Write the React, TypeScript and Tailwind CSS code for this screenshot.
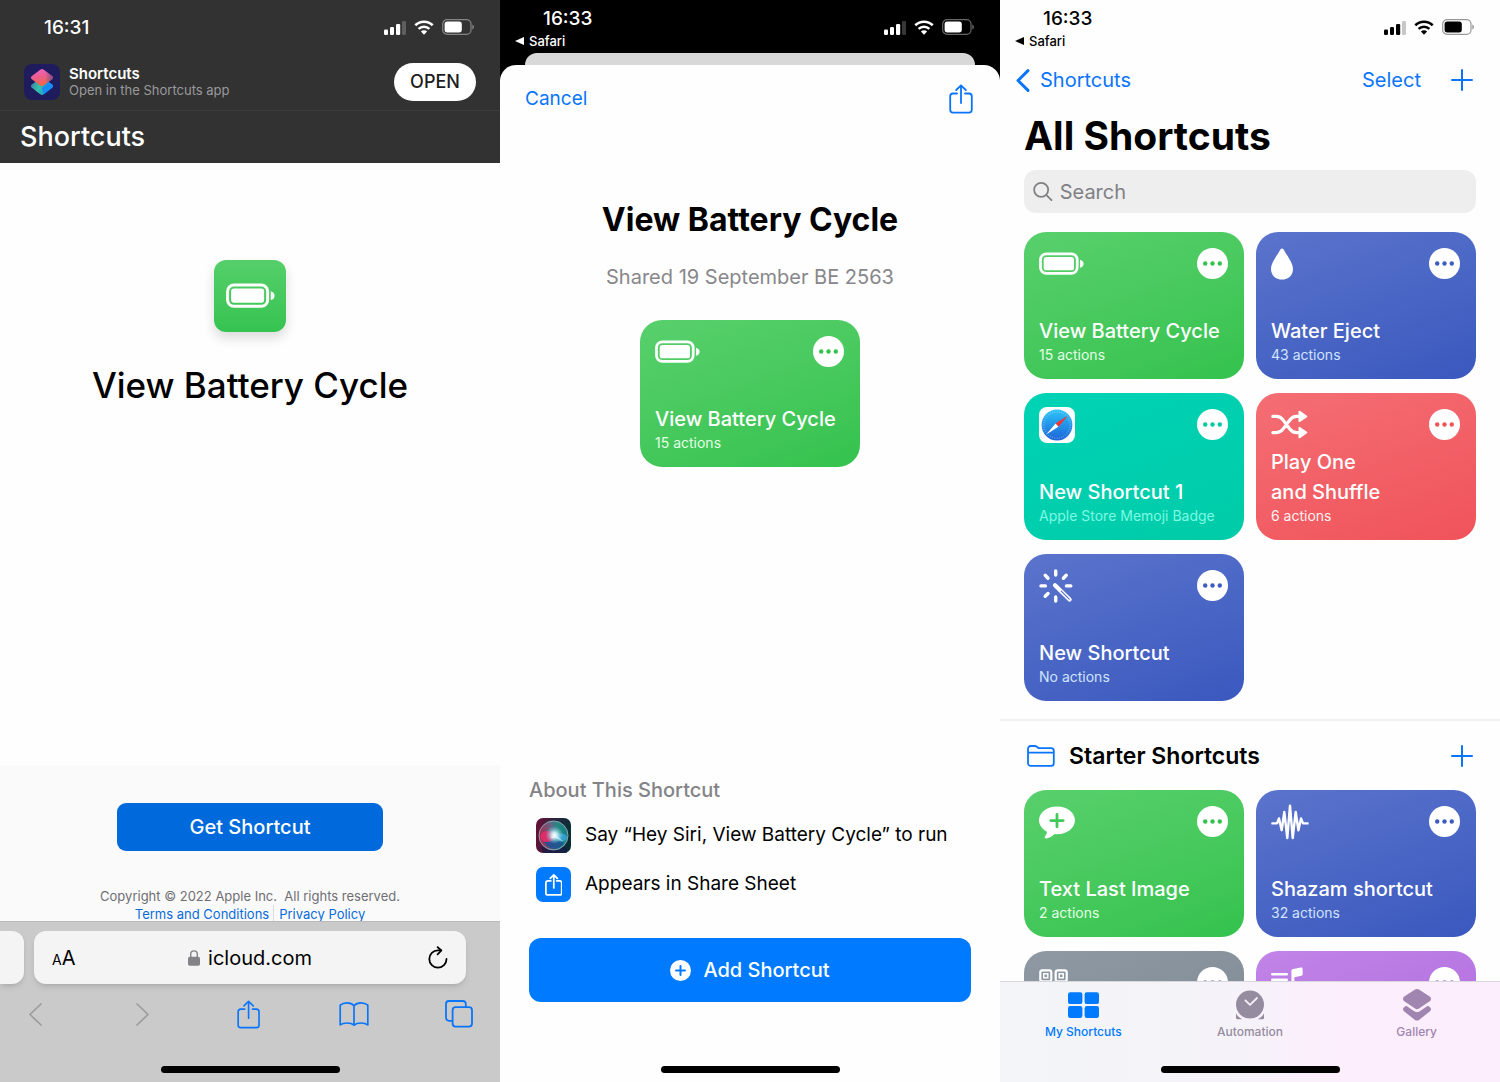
import type { ReactNode } from "react";
import clsx from "clsx";

type CardColor = "green" | "blue" | "teal" | "red" | "gray" | "purple";

interface Shortcut {
  id: string;
  title: string;
  subtitle: string;
  color: CardColor;
  icon: ReactNode;
}

const cardColors: Record<CardColor, string> = {
  green: "from-[#58d06c] to-[#34c24e]",
  blue: "from-[#5b74cc] to-[#3a58be]",
  teal: "from-[#00d3b5] to-[#00cba8]",
  red: "from-[#f46e74] to-[#f0525a]",
  gray: "from-[#8f99a3] to-[#7b8690]",
  purple: "from-[#c184e7] to-[#ac66dc]",
};

const subtitleColors: Record<CardColor, string> = {
  green: "text-[#e2ffe6]",
  blue: "text-[#d0e4ff]",
  teal: "text-[#7dfae4]",
  red: "text-[#fff0f0]",
  gray: "text-white",
  purple: "text-white",
};

const dotColors: Record<CardColor, string> = {
  green: "text-[#34c24e]",
  blue: "text-[#3d5bc0]",
  teal: "text-[#00c9a6]",
  red: "text-[#f0525a]",
  gray: "text-[#7b8690]",
  purple: "text-[#ac66dc]",
};

/* ---------- Icons ---------- */

function SignalIcon() {
  return (
    <svg width="22" height="15" viewBox="0 0 22 15" fill="currentColor">
      <rect x="0" y="9.5" width="4" height="5.5" rx="1.2" />
      <rect x="6" y="7" width="4" height="8" rx="1.2" />
      <rect x="12" y="4" width="4.2" height="11" rx="1.2" />
      <rect x="18" y="1" width="4" height="14" rx="1.2" opacity="0.22" />
    </svg>
  );
}

function WifiIcon() {
  return (
    <svg width="20" height="15" viewBox="0 0 20 15" fill="none">
      <path d="M1.3 5.3a12.6 12.6 0 0 1 17.4 0" stroke="currentColor" strokeWidth="2.6" />
      <path d="M4.6 8.8a7.8 7.8 0 0 1 10.8 0" stroke="currentColor" strokeWidth="2.5" />
      <path d="M10 14.8 6.9 11.6a4.4 4.4 0 0 1 6.2 0Z" fill="currentColor" />
    </svg>
  );
}

function StatusBatteryIcon() {
  return (
    <svg width="32" height="16" viewBox="0 0 32 16" fill="currentColor">
      <rect x="0.7" y="0.7" width="28.3" height="14.6" rx="4.4" fill="none" stroke="currentColor" strokeWidth="1.2" opacity="0.4" />
      <rect x="2.6" y="2.6" width="17.2" height="10.8" rx="2.6" />
      <path d="M30.4 5.6c1 .4 1.4 1.3 1.4 2.4s-.4 2-1.4 2.4Z" opacity="0.45" />
    </svg>
  );
}

function BatteryIcon({ className }: { className?: string }) {
  return (
    <svg viewBox="0 0 46 24" fill="white" className={className}>
      <rect x="1.5" y="1.9" width="37.6" height="20" rx="6" fill="none" stroke="white" strokeWidth="2.8" />
      <rect x="4.800" y="5.200" width="31" height="13.400" rx="2.600" />
      <path d="M42 7.800c2.400.6 3.600 2.300 3.600 4.100s-1.200 3.500-3.600 4.100Z" />
    </svg>
  );
}

function DropIcon() {
  return (
    <svg width="22" height="32" viewBox="0 0 22 32" fill="white">
      <path d="M11 .4c.7 0 1.200.4 1.600 1.100C16 7.800 22 14.600 22 21c0 6.400-4.800 10.600-11 10.600S0 27.400 0 21C0 14.600 6 7.800 9.400 1.500 9.800.8 10.300.4 11 .4Z" />
    </svg>
  );
}

function SafariIcon() {
  const ticks = Array.from({ length: 36 }, (_, i) => i * 10);
  return (
    <svg width="36" height="36" viewBox="0 0 36 36">
      <defs>
        <linearGradient id="safari-face" x1="0" y1="0" x2="0" y2="1">
          <stop offset="0" stopColor="#2cc3f8" />
          <stop offset="1" stopColor="#1b63d8" />
        </linearGradient>
      </defs>
      <rect width="36" height="36" rx="8" fill="#fff" />
      <circle cx="18" cy="18" r="15.400" fill="url(#safari-face)" />
      {ticks.map((angle) => (
        <path
          key={angle}
          d="M18 3.700v2"
          stroke="#fff"
          strokeWidth="0.500"
          opacity="0.500"
          transform={`rotate(${angle} 18 18)`}
        />
      ))}
      <path d="M28.800 8.800 16.600 16.400l2.800 3.400Z" fill="#f5322d" />
      <path d="M7.200 27.400 16.600 16.400l2.800 3.400Z" fill="#fff" />
    </svg>
  );
}

function ShuffleIcon() {
  return (
    <svg width="37" height="30" viewBox="0 0 37 30" fill="none">
      <path
        d="M1.800 6.400h3.700c3 0 4.900 1.300 6.700 3.700l6.600 8.900c1.900 2.500 3.700 3.600 6.700 3.600h3M1.800 22.600h3.700c3 0 4.900-1.300 6.700-3.700l6.600-8.900c1.900-2.500 3.700-3.600 6.700-3.600h3"
        stroke="white"
        strokeWidth="3.200"
        strokeLinecap="round"
      />
      <path d="M28.400 1.600v9.600l7-4.800ZM28.400 17.800v9.600l7-4.800Z" fill="white" stroke="white" strokeWidth="1.800" strokeLinejoin="round" />
    </svg>
  );
}

function WandIcon() {
  return (
    <svg width="34" height="34" viewBox="0 0 34 34" fill="none" stroke="white" strokeLinecap="round">
      <path
        strokeWidth="3.400"
        d="M16.700 2v4M16.700 28v4M2 16.900h4.400M27.400 16.900h4.400M6.200 6.300l2.800 2.900M27.200 6.300l-2.800 2.900M6.200 27.300 9 24.500"
      />
      <path strokeWidth="4.200" d="M16 16.200 30.600 30.600" />
      <path strokeWidth="1.100" stroke="#4f69c8" d="M22.300 22.200 30.200 30.100" />
    </svg>
  );
}

function MessagePlusIcon() {
  return (
    <svg width="36" height="33" viewBox="0 0 36 33">
      <path
        fill="white"
        d="M18 .4C28 .4 36 6.600 36 14.300s-8 14-18 14c-.9 0-1.700 0-2.400-.2-2.200 2.300-5 4-8 4.300-1.700.2-2.500-.9-1.500-2.200 1.100-1.400 1.900-2.900 1.900-4.400C3.200 23.300 0 19.100 0 14.300 0 6.600 8 .4 18 .4Z"
      />
      <path stroke="#41c95a" strokeWidth="2.800" strokeLinecap="round" d="M18 8.400v12.400M11.800 14.600h12.400" />
    </svg>
  );
}

function WaveIcon() {
  return (
    <svg width="38" height="36" viewBox="0 0 38 36" fill="none" stroke="white" strokeWidth="2.400" strokeLinecap="round" strokeLinejoin="round">
      <path d="M1.400 19.400H6l2-5 2.700 11.800L13.300 8l3 26L19 1.600 21.700 34l3-26L27.400 26.200l2.600-11.800 2 5h4.600" />
    </svg>
  );
}

function QrIcon() {
  return (
    <svg width="29" height="29" viewBox="0 0 29 29" fill="none" stroke="white" strokeWidth="2.200">
      <rect x="1.300" y="1.300" width="11" height="11" rx="2" />
      <rect x="16.700" y="1.300" width="11" height="11" rx="2" />
      <rect x="1.300" y="16.700" width="11" height="11" rx="2" />
      <rect x="4.800" y="4.800" width="4" height="4" strokeWidth="1.500" />
      <rect x="20.200" y="4.800" width="4" height="4" strokeWidth="1.500" />
    </svg>
  );
}

function MusicListIcon() {
  return (
    <svg width="33" height="32" viewBox="0 0 33 32" fill="white">
      <rect x="0" y="6" width="17" height="2.600" rx="1.300" />
      <rect x="0" y="11.500" width="17" height="2.600" rx="1.300" />
      <rect x="0" y="17" width="13" height="2.600" rx="1.300" />
      <path d="M20.400 4.200c0-1.200.6-2 1.800-2.200L30 .5c1-.2 1.600.3 1.600 1.300v5.400c0 .8-.4 1.300-1.200 1.500l-7 1.500v13c0 4-3.400 5.800-5.700 5.800-1.900 0-3.400-1.200-3.400-3 0-2.200 1.700-3.200 4-3.600 1.500-.3 2.100-.8 2.100-2Z" />
    </svg>
  );
}

function ShareIcon({ className, strokeWidth = 2 }: { className?: string; strokeWidth?: number }) {
  return (
    <svg
      viewBox="0 0 24 30"
      fill="none"
      stroke="currentColor"
      strokeWidth={strokeWidth}
      strokeLinecap="round"
      strokeLinejoin="round"
      className={className}
    >
      <path d="M8 9.500H4A2.800 2.800 0 0 0 1.200 12.300v13.500A2.800 2.800 0 0 0 4 28.600h16a2.800 2.800 0 0 0 2.800-2.800V12.300A2.800 2.800 0 0 0 20 9.500h-4" />
      <path d="M12 19V1.400M7.200 6 12 1.300 16.800 6" />
    </svg>
  );
}

function ShortcutsAppIcon() {
  return (
    <svg width="36" height="36" viewBox="0 0 36 36">
      <defs>
        <linearGradient id="app-top" x1="0.300" y1="0" x2="0.500" y2="1">
          <stop offset="0" stopColor="#ee5fc8" />
          <stop offset="0.500" stopColor="#ee5f86" />
          <stop offset="1" stopColor="#f0663f" />
        </linearGradient>
        <linearGradient id="app-bottom" x1="0" y1="0.300" x2="1" y2="0.600">
          <stop offset="0" stopColor="#3f7fa6" />
          <stop offset="0.400" stopColor="#35c3a8" />
          <stop offset="1" stopColor="#1a7df5" />
        </linearGradient>
        <linearGradient id="app-shade" x1="0.400" y1="0" x2="1" y2="0">
          <stop offset="0" stopColor="#6a4a90" stopOpacity="0" />
          <stop offset="1" stopColor="#6a4a90" stopOpacity="0.900" />
        </linearGradient>
      </defs>
      <rect width="36" height="36" rx="8" fill="#1e1c5c" />
      <path d="M16.200 14.400a3 3 0 0 1 3.600 0l8.300 6.200c1.300 1 1.300 2.200 0 3.200l-8.300 6.400a3 3 0 0 1-3.600 0l-8.300-6.400c-1.300-1-1.300-2.200 0-3.200Z" fill="url(#app-bottom)" />
      <path d="M16.200 5.700a3 3 0 0 1 3.600 0l8.300 6.300c1.300 1 1.300 2.200 0 3.200l-8.300 6.200a3 3 0 0 1-3.600 0l-8.300-6.200c-1.300-1-1.300-2.200 0-3.200Z" fill="url(#app-top)" />
      <path d="M16.200 5.700a3 3 0 0 1 3.600 0l8.300 6.300c1.300 1 1.300 2.200 0 3.200l-4 3-8.100-6.300Z" fill="url(#app-shade)" />
      <path d="m23.400 17.100 4.700 3.500c1.300 1 1.300 2.200 0 3.200l-8.300 6.400-2-6.300 4.500-3.500c1.300-1 1.800-2 1.100-3.300Z" fill="#168df6" />
    </svg>
  );
}

function SiriIcon() {
  return (
    <svg width="35" height="35" viewBox="0 0 35 35">
      <defs>
        <linearGradient id="siri-bg" x1="0" y1="0.200" x2="1" y2="0.300">
          <stop offset="0" stopColor="#6b0f35" />
          <stop offset="0.500" stopColor="#2c2440" />
          <stop offset="1" stopColor="#092e35" />
        </linearGradient>
        <linearGradient id="siri-orb" x1="0" y1="0.500" x2="1" y2="0.400">
          <stop offset="0" stopColor="#b5204f" />
          <stop offset="0.450" stopColor="#5d6a86" />
          <stop offset="0.700" stopColor="#21887f" />
          <stop offset="1" stopColor="#157a86" />
        </linearGradient>
        <radialGradient id="siri-glow">
          <stop offset="0" stopColor="#fff" />
          <stop offset="0.300" stopColor="#d8fbff" stopOpacity="0.850" />
          <stop offset="1" stopColor="#6fd6ee" stopOpacity="0" />
        </radialGradient>
      </defs>
      <rect width="35" height="35" rx="7" fill="url(#siri-bg)" />
      <path d="M4 29h27v6H8Z" fill="#14194a" opacity="0.600" />
      <circle cx="17.500" cy="17.500" r="14.500" fill="url(#siri-orb)" stroke="#8fb1b8" strokeWidth="0.900" />
      <path d="M8 24c6-2 14-2 20 1-5 8-15 8-20-1Z" fill="#1d4f93" opacity="0.850" />
      <ellipse cx="11" cy="18.500" rx="6.500" ry="5.500" fill="#e52d6b" opacity="0.850" />
      <ellipse cx="25.500" cy="19.500" rx="5.500" ry="4" fill="#3aa3d6" opacity="0.850" />
      <circle cx="18.500" cy="17" r="9" fill="url(#siri-glow)" />
      <path d="M14 19.500c3-1.500 6-2 9 0l4.500 4.500c-4-2-6-4-8-4-2 0-3.500.5-5.500-.5Z" fill="#fff" opacity="0.550" />
    </svg>
  );
}

function PlusIcon() {
  return (
    <svg width="22" height="22" viewBox="0 0 22 22" fill="none" stroke="currentColor" strokeWidth="2" strokeLinecap="round">
      <path d="M11 1v20M1 11h20" />
    </svg>
  );
}

/* ---------- Shared parts ---------- */

function StatusBar({ time, back, className }: { time: string; back?: boolean; className?: string }) {
  return (
    <div className={clsx("flex h-[54px] shrink-0 items-center justify-between pr-[26px]", className)}>
      {back ? (
        <div className="flex flex-col pt-1 pl-[15px]">
          <span className="pl-7 text-[19px] leading-6 font-medium">{time}</span>
          <a href="#safari" className="flex items-center gap-[5px] text-[13px] leading-5 font-medium">
            <svg width="9" height="8" viewBox="0 0 9 8" fill="currentColor">
              <path d="M0 4 9 0v8Z" />
            </svg>
            Safari
          </a>
        </div>
      ) : (
        <span className="pt-px pl-11 text-[19px] leading-6 font-medium">{time}</span>
      )}
      <div className="flex items-center gap-2">
        <SignalIcon />
        <WifiIcon />
        <StatusBatteryIcon />
      </div>
    </div>
  );
}

function HomeIndicator() {
  return <div className="mx-auto mb-[9px] h-[7px] w-[179px] shrink-0 rounded-full bg-black" />;
}

function ShortcutCard({ shortcut }: { shortcut: Shortcut }) {
  const { title, subtitle, color, icon } = shortcut;
  return (
    <article
      className={clsx(
        "flex h-[147px] flex-col justify-between rounded-[22px] bg-linear-160 px-[15px] pt-[14px] pb-[15px] text-white",
        cardColors[color],
      )}
    >
      <div className="flex h-9 items-center justify-between">
        {icon}
        <button
          aria-label={`Edit ${title}`}
          className={clsx("mr-px mb-px flex size-[31px] items-center justify-center rounded-full bg-white", dotColors[color])}
        >
          <svg width="19" height="5" viewBox="0 0 19 5" fill="currentColor">
            <circle cx="2.200" cy="2.500" r="2.200" />
            <circle cx="9.500" cy="2.500" r="2.200" />
            <circle cx="16.800" cy="2.500" r="2.200" />
          </svg>
        </button>
      </div>
      <div className="-mt-3">
        <h3 className="text-xl leading-[30px] font-medium whitespace-pre-line">{title}</h3>
        <p className={clsx("text-sm leading-[18px] whitespace-nowrap", subtitleColors[color])}>{subtitle}</p>
      </div>
    </article>
  );
}

const batteryShortcut: Shortcut = {
  id: "battery",
  title: "View Battery Cycle",
  subtitle: "15 actions",
  color: "green",
  icon: <BatteryIcon className="w-[45px]" />,
};

const allShortcuts: Shortcut[] = [
  batteryShortcut,
  { id: "water", title: "Water Eject", subtitle: "43 actions", color: "blue", icon: <DropIcon /> },
  { id: "new-1", title: "New Shortcut 1", subtitle: "Apple Store Memoji Badge", color: "teal", icon: <SafariIcon /> },
  { id: "shuffle", title: "Play One\nand Shuffle", subtitle: "6 actions", color: "red", icon: <ShuffleIcon /> },
  { id: "new", title: "New Shortcut", subtitle: "No actions", color: "blue", icon: <WandIcon /> },
];

const starterShortcuts: Shortcut[] = [
  { id: "text", title: "Text Last Image", subtitle: "2 actions", color: "green", icon: <MessagePlusIcon /> },
  { id: "shazam", title: "Shazam shortcut", subtitle: "32 actions", color: "blue", icon: <WaveIcon /> },
  { id: "qr", title: "", subtitle: "", color: "gray", icon: <QrIcon /> },
  { id: "music", title: "", subtitle: "", color: "purple", icon: <MusicListIcon /> },
];

/* ---------- Screens ---------- */

function SafariScreen() {
  return (
    <section className="flex min-h-0 flex-col overflow-hidden bg-[#fefefe]">
      <header className="shrink-0 bg-[#323232] text-white">
        <StatusBar time="16:31" />
        <div className="flex h-[57px] items-center border-b border-[#3d3d3d] px-6">
          <ShortcutsAppIcon />
          <div className="ml-[9px] flex-1">
            <p className="text-[15px] leading-[17px] font-semibold">Shortcuts</p>
            <p className="text-[13px] leading-[17px] text-[#9a9a9d]">Open in the Shortcuts app</p>
          </div>
          <button className="h-[38px] w-[82px] rounded-full bg-white text-lg font-medium text-[#1c1c1c]">OPEN</button>
        </div>
        <p className="px-5 py-2 text-[27px] leading-9 font-medium">Shortcuts</p>
      </header>

      <main className="flex flex-1 flex-col items-center pt-[97px]">
        <div className="flex size-[72px] items-center justify-center rounded-xl bg-linear-to-b from-[#55cf6a] to-[#35c350] shadow-[0_6px_12px_rgba(0,0,0,0.14)]">
          <BatteryIcon className="w-[49px]" />
        </div>
        <h1 className="mt-[29px] text-[35px] leading-[48px] font-medium text-black">View Battery Cycle</h1>
      </main>

      <footer className="flex h-[156px] shrink-0 flex-col items-center bg-[#fafafa] pt-[38px]">
        <button className="h-12 w-[266px] shrink-0 rounded-[9px] bg-[#006adc] text-xl font-medium text-white">
          Get Shortcut
        </button>
        <p className="mt-9 text-[13px] leading-[18px] text-[#6f6f73]">
          Copyright © 2022 Apple Inc. &nbsp;All rights reserved.
        </p>
        <p className="flex text-[13px] leading-[18px] text-[#0a6bdc]">
          <a href="#terms" className="border-r border-[#dcdcdc] pr-1">Terms and Conditions</a>
          <a href="#privacy" className="pl-[5px]">Privacy Policy</a>
        </p>
      </footer>

      <div className="flex shrink-0 flex-col border-t border-[#b9b9b9] bg-[#cacaca]">
        <div className="flex gap-[10px] pt-[9px] pr-[34px]">
          <div className="h-[53px] w-6 rounded-r-xl bg-[#f4f4f4] shadow-md" />
          <div className="flex h-[53px] flex-1 items-center justify-between rounded-xl bg-[#f4f4f4] px-[18px] text-black shadow-md">
            <button aria-label="Page settings" className="flex w-8 items-baseline">
              <span className="text-sm">A</span>
              <span className="text-xl">A</span>
            </button>
            <a href="#icloud" className="flex items-center gap-2 text-xl">
              <svg width="12" height="16" viewBox="0 0 12 16">
                <rect y="6.800" width="12" height="9" rx="1.800" fill="#838387" />
                <path d="M2.700 7.500V4.200a3.300 3.300 0 0 1 6.600 0v3.300" fill="none" stroke="#838387" strokeWidth="1.400" />
              </svg>
              icloud.com
            </a>
            <button aria-label="Reload" className="flex w-8 justify-end">
              <svg width="20" height="23" viewBox="0 0 20 23" fill="none" stroke="currentColor" strokeWidth="1.800" strokeLinecap="round" strokeLinejoin="round">
                <path d="M18.500 13a8.600 8.600 0 1 1-8.600-8.600h3.300" />
                <path d="M9.600 1.100 13.300 4.500 9.600 8.400" />
              </svg>
            </button>
          </div>
        </div>
        <nav className="mt-3 mb-[34px] flex h-9 items-center justify-between pr-[27px] pl-[21px] text-[#0a75fb]">
          <button aria-label="Back" className="flex w-7 justify-center text-[#9c9c9c]">
            <svg width="13" height="23" viewBox="0 0 13 23" fill="none" stroke="currentColor" strokeWidth="1.700" strokeLinecap="round" strokeLinejoin="round">
              <path d="M12 1 1 11.500 12 22" />
            </svg>
          </button>
          <button aria-label="Forward" className="flex w-8 justify-center text-[#9c9c9c]">
            <svg width="13" height="23" viewBox="0 0 13 23" fill="none" stroke="currentColor" strokeWidth="1.700" strokeLinecap="round" strokeLinejoin="round">
              <path d="m1 1 11 10.500L1 22" />
            </svg>
          </button>
          <button aria-label="Share" className="flex w-7 justify-center">
            <ShareIcon className="h-[29px]" strokeWidth={1.7} />
          </button>
          <button aria-label="Bookmarks" className="flex w-7 justify-center">
            <svg width="30" height="24" viewBox="0 0 30 24" fill="none" stroke="currentColor" strokeWidth="1.700" strokeLinejoin="round" className="shrink-0">
              <path d="M15 3.800C13.400 1.900 11 .9 8 .9 5.200.9 2.900 1.700 1.200 3.200V22.900C3 21.600 5.200 21 8 21c3 0 5.400.7 7 2.200 1.600-1.500 4-2.200 7-2.200 2.800 0 5 .6 6.800 1.900V3.200C27.100 1.700 24.800.9 22 .9c-3 0-5.400 1-7 2.900ZM15 3.800v19.400" />
            </svg>
          </button>
          <button aria-label="Tabs" className="flex w-7 justify-center">
            <svg width="28" height="28" viewBox="0 0 28 28" fill="none" stroke="currentColor" strokeWidth="1.800" className="shrink-0">
              <rect x="7.600" y="7.200" width="19.400" height="19.400" rx="3" />
              <path d="M7.600 20.800H4A3 3 0 0 1 1 17.800V4a3 3 0 0 1 3-3h13.800a3 3 0 0 1 3 3v3.200" />
            </svg>
          </button>
        </nav>
        <HomeIndicator />
      </div>
    </section>
  );
}

function AddShortcutScreen() {
  return (
    <section className="flex min-h-0 flex-col overflow-hidden bg-black">
      <StatusBar time="16:33" back className="text-white" />
      <div className="-mt-px mx-[25px] h-3 shrink-0 rounded-t-xl bg-[#d8d8d8]" />
      <div className="flex flex-1 flex-col rounded-t-2xl bg-[#fefefe]">
        <header className="flex h-[68px] items-center justify-between pr-[27px] pl-[25px] text-[#0a75fb]">
          <button className="text-[19px]">Cancel</button>
          <button aria-label="Share">
            <ShareIcon className="h-[30px]" strokeWidth={1.8} />
          </button>
        </header>
        <main className="flex flex-1 flex-col items-center pt-[65px]">
          <h1 className="text-[32px] leading-[44px] font-bold text-black">View Battery Cycle</h1>
          <p className="mt-[21px] text-xl leading-7 text-[#87878b]">Shared 19 September BE 2563</p>
          <div className="mt-[29px] w-[220px]">
            <ShortcutCard shortcut={batteryShortcut} />
          </div>
        </main>
        <div className="px-[29px] pb-16">
          <h2 className="text-xl leading-7 font-medium text-[#838387]">About This Shortcut</h2>
          <ul className="mt-[14px] flex flex-col gap-[14px] pl-[7px] text-[19px] text-black">
            <li className="flex h-[35px] items-center gap-[14px] whitespace-nowrap">
              <SiriIcon />
              Say “Hey Siri, View Battery Cycle” to run
            </li>
            <li className="flex h-[35px] items-center gap-[14px] whitespace-nowrap">
              <span className="flex size-[35px] items-center justify-center rounded-[7px] bg-[#007aff] text-white">
                <ShareIcon className="h-[22px]" strokeWidth={2.4} />
              </span>
              Appears in Share Sheet
            </li>
          </ul>
          <button className="mt-9 flex h-16 w-full items-center justify-center gap-3 rounded-xl bg-[#007aff] text-xl font-medium text-white">
            <svg width="21" height="21" viewBox="0 0 21 21">
              <circle cx="10.500" cy="10.500" r="10.500" fill="white" />
              <path d="M10.500 6v9M6 10.500h9" stroke="#007aff" strokeWidth="2" strokeLinecap="round" />
            </svg>
            Add Shortcut
          </button>
        </div>
        <HomeIndicator />
      </div>
    </section>
  );
}

function AllShortcutsScreen() {
  return (
    <section className="flex min-h-0 flex-col overflow-hidden bg-[#fefefe]">
      <StatusBar time="16:33" back className="text-black" />
      <header className="flex h-[52px] shrink-0 items-center justify-between pr-[27px] pl-4 text-xl text-[#0a75fb]">
        <a href="#shortcuts" className="flex items-center gap-[10px]">
          <svg width="14" height="23" viewBox="0 0 14 23" fill="none" stroke="currentColor" strokeWidth="3" strokeLinecap="round" strokeLinejoin="round">
            <path d="M12 1.600 2 11.500 12 21.400" />
          </svg>
          Shortcuts
        </a>
        <div className="flex items-center gap-[30px]">
          <button>Select</button>
          <button aria-label="New shortcut">
            <PlusIcon />
          </button>
        </div>
      </header>

      <main className="min-h-0 flex-1 overflow-hidden">
        <div className="px-6 pt-[6px]">
          <h1 className="text-[39px] leading-[48px] font-bold text-black">All Shortcuts</h1>
          <label className="mt-[10px] flex h-[43px] items-center gap-[7px] rounded-xl bg-[#eeeeef] px-[9px] text-[#808084]">
            <svg width="21" height="21" viewBox="0 0 21 21" fill="none" stroke="currentColor" strokeWidth="1.900" strokeLinecap="round">
              <circle cx="8.700" cy="8.700" r="7.500" />
              <path d="m14.300 14.300 5.400 5.300" />
            </svg>
            <input
              type="search"
              placeholder="Search"
              aria-label="Search"
              className="w-full bg-transparent text-xl outline-none placeholder:text-[#808084]"
            />
          </label>
          <div className="mt-[19px] grid grid-cols-2 gap-x-3 gap-y-[14px]">
            {allShortcuts.map((s) => (
              <ShortcutCard key={s.id} shortcut={s} />
            ))}
          </div>
        </div>

        <div className="mt-[18px] border-t-2 border-[#f1f1f5] px-6">
          <div className="flex h-[69px] items-center pr-[3px] pl-[3px]">
            <svg width="28" height="22" viewBox="0 0 28 22" fill="none" stroke="#0a75fb" strokeWidth="1.800" strokeLinejoin="round">
              <path d="M1 18.200V3.600A2.600 2.600 0 0 1 3.600 1h4.200c.9 0 1.500.3 2.100.8l.8.7c.6.500 1.100.7 2 .7h11.500a2.600 2.600 0 0 1 2.600 2.600v12.400a2.600 2.600 0 0 1-2.600 2.600H3.600A2.600 2.600 0 0 1 1 18.200ZM1 7.700h25.800" />
            </svg>
            <h2 className="ml-[14px] flex-1 text-[23px] leading-8 font-semibold text-black">Starter Shortcuts</h2>
            <button aria-label="Add to Starter Shortcuts" className="text-[#0a75fb]">
              <PlusIcon />
            </button>
          </div>
          <div className="grid grid-cols-2 gap-x-3 gap-y-[14px]">
            {starterShortcuts.map((s) => (
              <ShortcutCard key={s.id} shortcut={s} />
            ))}
          </div>
        </div>
      </main>

      <div className="flex h-[101px] shrink-0 flex-col justify-between border-t border-[#d9d6de] bg-linear-to-r from-[#f3f5f8] from-0% via-[#f5f3f9] via-45% to-[#fdeefd] to-70%">
        <nav className="grid grid-cols-3 pt-[7px] text-xs font-medium">
          <button className="flex flex-col items-center gap-[3px] text-[#007aff]">
            <svg width="31" height="32" viewBox="0 0 31 32" fill="currentColor">
              <rect x="0" y="3.300" width="14.400" height="11.800" rx="2.200" />
              <rect x="16.600" y="3.300" width="14.400" height="11.800" rx="2.200" />
              <rect x="0" y="17.100" width="14.400" height="11.800" rx="2.200" />
              <rect x="16.600" y="17.100" width="14.400" height="11.800" rx="2.200" />
            </svg>
            My Shortcuts
          </button>
          <button className="flex flex-col items-center gap-[3px] text-[#958c9f]">
            <svg width="28" height="32" viewBox="0 0 28 32" fill="currentColor">
              <circle cx="14" cy="15.600" r="14" />
              <path d="M0 24.200c1.400 2.600 3.400 4.600 6.200 6H1.200C.4 30.200 0 29.800 0 29ZM28 24.200c-1.400 2.600-3.400 4.600-6.200 6h5c.8 0 1.200-.4 1.200-1.200Z" />
              <path d="m9.400 11.400 4.600 4.400 7-6.800" fill="none" stroke="#f7f0fa" strokeWidth="1.800" strokeLinecap="round" strokeLinejoin="round" />
            </svg>
            Automation
          </button>
          <button className="flex flex-col items-center gap-[3px] text-[#a085b0]">
            <svg width="28" height="32" viewBox="0 0 28 32" fill="currentColor">
              <path d="M12 .6a4 4 0 0 1 4 0l10.700 7c1.700 1.200 1.700 3.500 0 4.700L16 19.600a4 4 0 0 1-4 0L1.300 12.300c-1.700-1.200-1.700-3.500 0-4.700Z" />
              <path d="M3.300 16.700 10.800 22a5.500 5.500 0 0 0 6.400 0l7.500-5.300 2 1.400c1.700 1.200 1.700 3.200 0 4.400L16 31a4 4 0 0 1-4 0L1.300 22.500c-1.700-1.200-1.700-3.200 0-4.400Z" />
            </svg>
            Gallery
          </button>
        </nav>
        <HomeIndicator />
      </div>
    </section>
  );
}

export default function App() {
  return (
    <div className="grid h-screen grid-cols-3 font-['Inter',sans-serif]">
      <SafariScreen />
      <AddShortcutScreen />
      <AllShortcutsScreen />
    </div>
  );
}
